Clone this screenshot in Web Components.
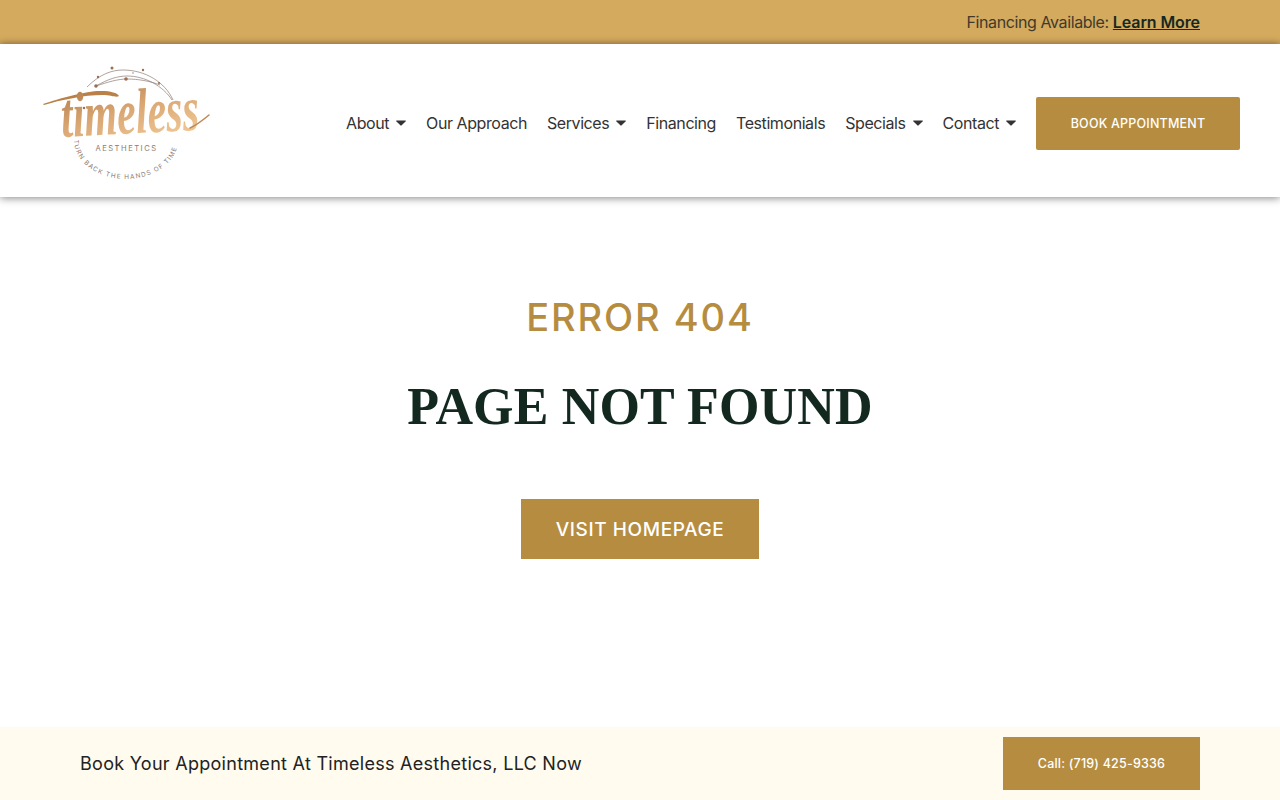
<!DOCTYPE html>
<html lang="en">
<head>
<meta charset="utf-8">
<title>Page not found</title>
<style>
  html, body { margin: 0; padding: 0; background: #fff; }
  body { height: 800px; overflow: hidden; display: flex; flex-direction: column; font-family: Inter, "Liberation Sans", sans-serif; }
</style>
</head>
<body>
<top-bar></top-bar>
<site-header>
  <nav-item caret>About</nav-item>
  <nav-item>Our Approach</nav-item>
  <nav-item caret>Services</nav-item>
  <nav-item>Financing</nav-item>
  <nav-item>Testimonials</nav-item>
  <nav-item caret>Specials</nav-item>
  <nav-item caret>Contact</nav-item>
</site-header>
<not-found></not-found>
<cta-bar></cta-bar>

<script>
class TopBar extends HTMLElement {
    constructor() {
        super();
        this.attachShadow({ mode: 'open' }).innerHTML = `
            <style>
                :host {
                    display: flex;
                    justify-content: flex-end;
                    align-items: center;
                    height: 44px;
                    padding: 0 80px 0 0;
                    box-sizing: border-box;
                    background: #d4aa5e;
                    color: #3f3a2c;
                    font: 16px/24px Inter, sans-serif;
                    letter-spacing: -.4px;
                }
                a { color: #13291f; font-weight: 600; text-decoration: underline; letter-spacing: -.1px; }
            </style>
            <span>Financing Available: <a href="#">Learn More</a></span>
        `;
    }
}

class NavItem extends HTMLElement {
    constructor() {
        super();
        this.attachShadow({ mode: 'open' }).innerHTML = `
            <style>
                :host {
                    display: inline-flex;
                    align-items: center;
                    gap: 7px;
                    color: #333;
                    font: 16px/24px Inter, sans-serif;
                    letter-spacing: -.42px;
                }
                svg { display: none; width: 10px; height: 6px; }
                :host([caret]) svg { display: block; }
            </style>
            <slot></slot>
            <svg viewBox="0 0 10 6"><path d="M0.6 0.4h8.8c.5 0 .7.5.4.9L5.4 5.5c-.2.2-.6.2-.8 0L.2 1.3C-.1.9.1.4.6.4z" fill="#333"/></svg>
        `;
    }
}

class SiteLogo extends HTMLElement {
    constructor() {
        super();
        this.attachShadow({ mode: 'open' }).innerHTML = `
            <style>
                :host { display: block; width: 170px; height: 118px; }
                svg { display: block; overflow: visible; }
            </style>
            <svg width="170" height="118" viewBox="0 0 170 118">
                <defs>
                    <linearGradient id="g" x1="0" y1="0" x2="0.5" y2="1">
                        <stop offset="0" stop-color="#a8703f"/>
                        <stop offset="0.55" stop-color="#d9a672"/>
                        <stop offset="1" stop-color="#eec592"/>
                    </linearGradient>
                    <path id="ring" d="M34 78 A52 39 0 0 0 138 78"/>
                </defs>
                <g fill="none" stroke="#8d7a72" stroke-width=".7">
                    <path d="M47 25 C60 12 72 8 83 8 C105 8 125 20 133 38"/>
                    <path d="M56 24 C68 17 78 14 87 14 C105 14 123 24 132 38"/>
                    <path d="M56 24 C68 20 78 17 87 17 C98 17 110 19 120 23"/>
                </g>
                <g fill="#9a6e50">
                    <circle cx="72" cy="6" r="1.5"/><circle cx="103" cy="8" r="1.2"/>
                    <circle cx="58" cy="15" r="1.2"/><circle cx="86" cy="17" r="1.8"/>
                    <circle cx="56" cy="24" r="1.8"/><circle cx="93" cy="11" r=".7"/>
                    <circle cx="119" cy="21" r="1.1"/><circle cx="44" cy="46" r="1.2"/>
                </g>
                <path d="M3 42 C20 36 50 28 62 29 C70 29 78 31 79 34 C76 36 72 33 62 33 C45 33 20 38 4 43z" fill="#b98147"/>
                <text x="22" y="75" transform="rotate(-3 22 75)" fill="url(#g)" font-family="'Liberation Serif', serif" font-style="italic" font-weight="700" font-size="64" textLength="138" lengthAdjust="spacingAndGlyphs">timeless</text>
                <path d="M150 66 C157 63 163 58 169 53" fill="none" stroke="#c08a58" stroke-width="1.6" stroke-linecap="round"/>
                <text x="86.5" y="89" text-anchor="middle" fill="#8d7a72" font-family="Inter, sans-serif" font-size="7.6" letter-spacing="1.5">AESTHETICS</text>
                <text fill="#8d7a72" font-family="Inter, sans-serif" font-size="6.4" letter-spacing="1.2"><textPath href="#ring">TURN BACK THE HANDS OF TIME</textPath></text>
            </svg>
        `;
    }
}

class SiteHeader extends HTMLElement {
    constructor() {
        super();
        this.attachShadow({ mode: 'open' }).innerHTML = `
            <style>
                :host {
                    display: flex;
                    align-items: center;
                    justify-content: space-between;
                    height: 153px;
                    padding: 0 40px;
                    box-sizing: border-box;
                    background: #fff;
                    box-shadow: 0 -1px 7px rgba(0,0,0,.26), 0 2px 8px rgba(0,0,0,.3);
                    position: relative;
                }
                .right { display: flex; align-items: center; padding-top: 6px; }
                nav { display: flex; align-items: center; gap: 20px; margin-right: 20px; padding-bottom: 1px; }
                a.book {
                    display: block;
                    width: 204px;
                    height: 53px;
                    text-align: center;
                    background: #b68d40;
                    color: #fff;
                    border-radius: 2px;
                    font: 450 12.5px/53px Inter, sans-serif;
                    letter-spacing: .2px;
                    text-decoration: none;
                }
            </style>
            <site-logo></site-logo>
            <div class="right">
                <nav><slot></slot></nav>
                <a class="book" href="#">BOOK APPOINTMENT</a>
            </div>
        `;
    }
}

class NotFound extends HTMLElement {
    constructor() {
        super();
        this.attachShadow({ mode: 'open' }).innerHTML = `
            <style>
                :host {
                    display: flex;
                    flex-direction: column;
                    align-items: center;
                    flex: 1;
                    padding-top: 97px;
                    box-sizing: border-box;
                }
                .code {
                    margin: 0;
                    color: #b68d40;
                    font: 550 38px/46px Inter, sans-serif;
                    letter-spacing: 1.9px;
                }
                h1 {
                    margin: 37px 0 0;
                    color: #13291f;
                    font: 700 52px/60px "Liberation Serif", serif;
                    letter-spacing: .15px;
                }
                a {
                    display: block;
                    margin-top: 62px;
                    width: 238px;
                    height: 60px;
                    text-align: center;
                    background: #b68d40;
                    color: #fff;
                    font: 500 19px/62px Inter, sans-serif;
                    letter-spacing: .6px;
                    text-decoration: none;
                }
            </style>
            <p class="code">ERROR 404</p>
            <h1>PAGE NOT FOUND</h1>
            <a href="#">VISIT HOMEPAGE</a>
        `;
    }
}

class CtaBar extends HTMLElement {
    constructor() {
        super();
        this.attachShadow({ mode: 'open' }).innerHTML = `
            <style>
                :host {
                    display: flex;
                    align-items: center;
                    justify-content: space-between;
                    height: 73px;
                    padding: 0 80px;
                    box-sizing: border-box;
                    background: #fffbee;
                    color: #222;
                    font: 18px/24px Inter, sans-serif;
                    letter-spacing: .28px;
                }
                a {
                    display: block;
                    width: 197px;
                    height: 53px;
                    text-align: center;
                    background: #b68d40;
                    color: #fff;
                    font: 500 12.5px/53px Inter, sans-serif;
                    letter-spacing: .2px;
                    text-decoration: none;
                }
            </style>
            <span>Book Your Appointment At Timeless Aesthetics, LLC Now</span>
            <a href="#">Call: (719) 425-9336</a>
        `;
    }
}

customElements.define('top-bar', TopBar);
customElements.define('nav-item', NavItem);
customElements.define('site-logo', SiteLogo);
customElements.define('site-header', SiteHeader);
customElements.define('not-found', NotFound);
customElements.define('cta-bar', CtaBar);
</script>
</body>
</html>
